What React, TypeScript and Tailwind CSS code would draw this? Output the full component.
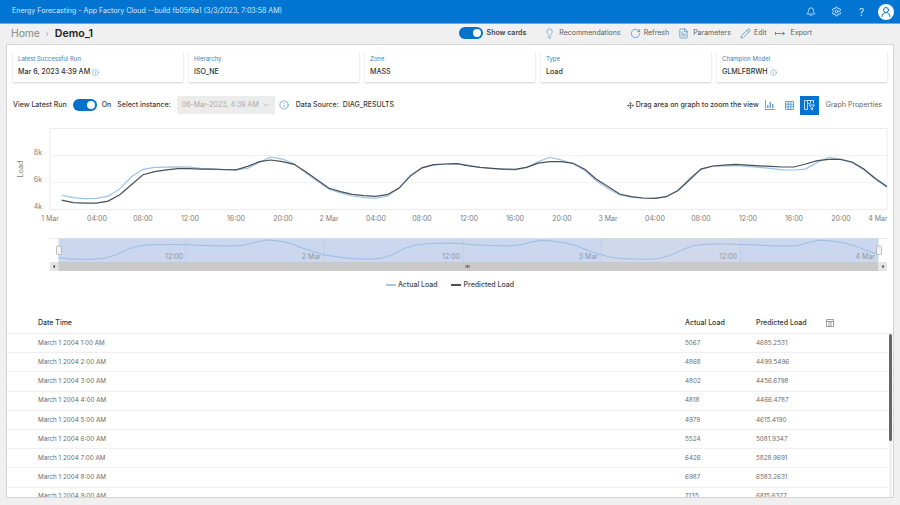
import React from "react";
import { Bell, Settings, Lightbulb, RotateCw, FileText, Pencil, Info, ChevronDown, ChevronRight, Move, UserRound } from "lucide-react";

const actual = [
  5067, 4868, 4802, 4818, 4979, 5524, 6426, 6987, 7135, 7150, 7170, 7140, 7050, 7000, 6950, 6930, 7050, 7500, 7900, 7750, 7400, 6700, 6100, 5500,
  5230, 4990, 4870, 4820, 4970, 5570, 6560, 7100, 7300, 7380, 7400, 7300, 7120, 7050, 6980, 6950, 7130, 7560, 7880, 7680, 7400, 6900, 6120, 5560,
  5070, 4900, 4830, 4810, 4920, 5420, 6300, 7000, 7200, 7250, 7260, 7200, 7130, 7050, 6950, 6930, 7000, 7500, 7880, 7730, 7480, 6950, 6240, 5620,
];
const predicted = [
  4685, 4499, 4456, 4466, 4615, 5081, 5828, 6583, 6815, 6950, 7030, 7040, 7000, 6990, 6970, 6950, 7200, 7550, 7680, 7550, 7360, 6800, 6190, 5570,
  5310, 5120, 5020, 4970, 5090, 5570, 6480, 7100, 7330, 7380, 7400, 7250, 7130, 7060, 7000, 6985, 7130, 7450, 7550, 7550, 7430, 6985, 6240, 5700,
  5140, 4940, 4840, 4820, 4940, 5390, 6190, 7000, 7230, 7300, 7360, 7300, 7250, 7200, 7160, 7160, 7380, 7630, 7730, 7730, 7530, 7000, 6300, 5700,
];

const mainPts = (d: number[]) =>
  d.map((v, i) => `${(50 + (i + 1) * 11.625).toFixed(1)},${(209.3 - ((v - 4000) / 1000) * 13.4).toFixed(1)}`).join(" ");
const navPts = (d: number[]) =>
  d.map((v, i) => `${(58.5 + i * 11.54).toFixed(1)},${(259.3 - ((v - 4800) / 3100) * 19.3).toFixed(1)}`).join(" ");

const xTicks = [
  [50, "1 Mar"], [97, "04:00"], [143, "08:00"], [190, "12:00"], [236, "16:00"], [283, "20:00"], [329, "2 Mar"],
  [376, "04:00"], [422, "08:00"], [469, "12:00"], [515, "16:00"], [562, "20:00"], [608, "3 Mar"],
  [655, "04:00"], [701, "08:00"], [748, "12:00"], [794, "16:00"], [841, "20:00"], [878, "4 Mar"],
] as const;

const rows = [
  ["March 1 2004 1:00 AM", "5067", "4685.2531"],
  ["March 1 2004 2:00 AM", "4868", "4499.5496"],
  ["March 1 2004 3:00 AM", "4802", "4456.6798"],
  ["March 1 2004 4:00 AM", "4818", "4466.4787"],
  ["March 1 2004 5:00 AM", "4979", "4615.4190"],
  ["March 1 2004 6:00 AM", "5524", "5081.9347"],
  ["March 1 2004 7:00 AM", "6426", "5828.9691"],
  ["March 1 2004 8:00 AM", "6987", "6583.2631"],
  ["March 1 2004 9:00 AM", "7135", "6815.6377"],
];

const cards = [
  { label: "Latest Successful Run", value: "Mar 6, 2023 4:39 AM", info: true },
  { label: "Hierarchy", value: "ISO_NE" },
  { label: "Zone", value: "MASS" },
  { label: "Type", value: "Load" },
  { label: "Champion Model", value: "GLMLFBRWH", info: true },
];

const Toggle = () => (
  <span className="flex h-[12px] w-[24px] items-center justify-end rounded-full bg-[#0272cc] pr-[2px]">
    <span className="h-[8px] w-[8px] rounded-full bg-white" />
  </span>
);

const Chart = () => (
  <svg className="block h-[155px] w-[886px]" viewBox="7 120 886 155" fontFamily="Inter, sans-serif">
    <rect x="50" y="128.5" width="837" height="81" fill="none" stroke="#ececec" />
    <line x1="50" x2="887" y1="155.5" y2="155.5" stroke="#f2f2f2" />
    <line x1="50" x2="887" y1="182.5" y2="182.5" stroke="#f2f2f2" />
    <g fontSize="7" fill="#7d7d7d" textAnchor="end">
      <text x="42" y="155">8k</text>
      <text x="42" y="182">6k</text>
      <text x="42" y="209">4k</text>
    </g>
    <text x="0" y="0" fontSize="7" fill="#7d7d7d" textAnchor="middle" transform="translate(23 169) rotate(-90)">Load</text>
    <g fontSize="7" fill="#7d7d7d" textAnchor="middle">
      {xTicks.map(([x, t], i) => (
        <text key={i} x={x} y="221">{t}</text>
      ))}
    </g>
    <polyline points={mainPts(actual)} fill="none" stroke="#9cc3e6" strokeWidth="1.2" />
    <polyline points={mainPts(predicted)} fill="none" stroke="#4a5058" strokeWidth="1.2" />

    {/* navigator */}
    <line x1="50" x2="887" y1="238.5" y2="238.5" stroke="#e6e6e6" />
    <rect x="58.5" y="238.5" width="819.5" height="23.5" fill="#cad7ee" />
    <rect x="601.5" y="238.5" width="138.5" height="23.5" fill="#d0d9ec" />
    {[185.7, 324, 463, 601.5, 740, 878].map((x) => (
      <line key={x} x1={x} x2={x} y1="238.5" y2="262" stroke="#bcc8e0" strokeWidth="0.7" />
    ))}
    <g fontSize="7" fill="#8f97a8" textAnchor="end">
      <text x="183" y="259">12:00</text>
      <text x="321" y="259">2 Mar</text>
      <text x="460" y="259">12:00</text>
      <text x="598" y="259">3 Mar</text>
      <text x="737" y="259">12:00</text>
      <text x="875" y="259">4 Mar</text>
    </g>
    <polyline points={navPts(actual)} fill="none" stroke="#9bbde2" strokeWidth="1" />
    <rect x="50" y="262" width="837" height="9" fill="#c9c9c9" />
    <rect x="50" y="262" width="8.5" height="9" fill="#e4e4e4" />
    <rect x="878" y="262" width="9" height="9" fill="#e4e4e4" />
    <path d="M52.8 266.5l2.2-1.8v3.6z" fill="#444" />
    <path d="M884.5 266.5l-2.2-1.8v3.6z" fill="#444" />
    <path d="M466 265v3M467.5 265v3M469 265v3" stroke="#444" strokeWidth="0.7" />
    <rect x="56.5" y="246" width="5" height="8.5" rx="1" fill="#f2f2f2" stroke="#999" strokeWidth="0.6" />
    <rect x="876.5" y="246" width="5" height="8.5" rx="1" fill="#f2f2f2" stroke="#999" strokeWidth="0.6" />
  </svg>
);

const ActionItem = ({ icon, label, gap }: { icon: React.ReactNode; label: string; gap: string }) => (
  <span className={`flex items-center ${gap} text-[#5c5c5c]`}>
    {icon}
    {label}
  </span>
);

export default function App() {
  return (
    <div className="h-[505px] w-[900px] overflow-hidden bg-[#f0f0f0] font-['Inter',sans-serif]">
      {/* top bar */}
      <header className="flex h-[24px] items-center justify-between border-b border-[#5cb0ec] bg-[#0275d3] pl-[12px] pr-[6px] text-white">
        <span className="text-[7.05px] text-[#d6e9f8]">Energy Forecasting - App Factory Cloud --build fb05f9a1 (3/3/2023, 7:03:58 AM)</span>
        <div className="flex items-center">
          <Bell className="h-[10px] w-[10px] text-[#d6e9f8]" />
          <Settings className="ml-[15px] h-[11px] w-[11px] text-[#d6e9f8]" />
          <span className="ml-[17px] text-[10px] leading-none text-[#d6e9f8]">?</span>
          <span className="ml-[14px] flex h-[16px] w-[16px] items-center justify-center rounded-full bg-white">
            <UserRound className="h-[12px] w-[12px] text-[#0275d3]" />
          </span>
        </div>
      </header>

      {/* breadcrumb and actions */}
      <div className="flex h-[20px] items-center justify-between pl-[11px] pr-[88px]">
        <div className="flex items-center">
          <span className="text-[10.3px] text-[#8a8a8a]">Home</span>
          <ChevronRight className="ml-[3px] h-[8px] w-[8px] text-[#999]" />
          <span className="ml-[4px] text-[10.6px] font-semibold text-[#222]">Demo_1</span>
        </div>
        <div className="-mt-[2px] flex items-center text-[7px]">
          <Toggle />
          <span className="ml-[4px] font-semibold text-[#444]">Show cards</span>
          <div className="ml-[18px] flex items-center gap-[9px]">
            <ActionItem gap="gap-[4px]" label="Recommendations" icon={<Lightbulb className="h-[11px] w-[11px] text-[#4d94d4]" strokeWidth={1.5} />} />
            <ActionItem gap="gap-[3px]" label="Refresh" icon={<RotateCw className="h-[11px] w-[11px] text-[#3d87c9]" strokeWidth={1.5} />} />
            <ActionItem gap="gap-[4px]" label="Parameters" icon={<FileText className="h-[11px] w-[11px] text-[#3d87c9]" strokeWidth={1.5} />} />
            <ActionItem gap="gap-[3px]" label="Edit" icon={<Pencil className="h-[11px] w-[11px] text-[#3d87c9]" strokeWidth={1.5} />} />
            <ActionItem
              gap="gap-[4px]"
              label="Export"
              icon={
                <svg className="h-[11px] w-[11px]" viewBox="0 0 11 11" fill="none" stroke="#3d87c9" strokeWidth="0.9">
                  <path d="M0.5 4v3M0.5 5.5h9M7.7 3.8l2 1.7-2 1.7" />
                </svg>
              }
            />
          </div>
        </div>
      </div>

      {/* main panel */}
      <main className="relative ml-[6px] h-[454px] w-[888px] overflow-hidden border border-[#d4d4d4] bg-white">
        <div className="grid grid-cols-5 gap-[6px] pl-[6px] pr-[6px] pt-[6px]">
          {cards.map((c) => (
            <div key={c.label} className="h-[31px] bg-white pl-[5px] pt-[3px] shadow-[0_1px_2px_rgba(0,0,0,0.18)]">
              <div className="text-[6px] leading-[9px] text-[#3d7fbd]">{c.label}</div>
              <div className="mt-[4px] flex items-center gap-[2px] text-[7.1px] font-medium leading-[10px] text-[#333]">
                {c.value}
                {c.info && <Info className="h-[7px] w-[7px] text-[#6aa5da]" />}
              </div>
            </div>
          ))}
        </div>

        {/* controls */}
        <div className="mt-[13px] flex h-[20px] items-center justify-between pl-[6px] pr-[11px] text-[7px] font-medium text-[#3a3a3a]">
          <div className="flex items-center">
            <span>View Latest Run</span>
            <span className="ml-[6px]"><Toggle /></span>
            <span className="ml-[5px]">On</span>
            <span className="ml-[6px]">Select instance:</span>
            <span className="ml-[6px] flex h-[18px] w-[98px] items-center justify-between whitespace-nowrap bg-[#ececec] pl-[5px] pr-[5px] font-normal text-[#aaaaaa]">
              06-Mar-2023, 4:39 AM
              <ChevronDown className="h-[8px] w-[8px]" />
            </span>
            <Info className="ml-[4px] h-[10px] w-[10px] text-[#2f80c8]" strokeWidth={1.5} />
            <span className="ml-[7px]">Data Source:</span>
            <span className="ml-[4px]">DIAG_RESULTS</span>
          </div>
          <div className="flex items-center">
            <Move className="h-[7px] w-[7px] text-[#333]" />
            <span className="ml-[2px]">Drag area on graph to zoom the view</span>
            <svg className="ml-[6px] h-[10px] w-[10px]" viewBox="0 0 10 10" fill="#6ea6d6">
              <path d="M0 0h1v9h9v1H0zM2 5h1.5v3H2zM4.5 2h1.5v6H4.5zM7 4h1.5v4H7z" />
            </svg>
            <svg className="ml-[10px] h-[9px] w-[9px]" viewBox="0 0 9 9" fill="none" stroke="#4c8fcb" strokeWidth="0.8">
              <path d="M0.5 0.5h8v8h-8zM3.2 0.5v8M5.8 0.5v8M0.5 3.2h8M0.5 5.8h8" />
            </svg>
            <span className="ml-[6px] flex h-[19px] w-[19px] items-center justify-center bg-[#0275d3]">
              <svg className="h-[11px] w-[11px]" viewBox="0 0 11 11" fill="none" stroke="#d7e9f8" strokeWidth="0.9">
                <path d="M0.5 0.5h9M0.5 0.5v9h3v-9M3.5 3.5h2M6.5 0.5v3M9.5 0.5v3M5 5h5.5L8.5 7.5v2.5l-1.5-1V7.5z" />
              </svg>
            </span>
            <span className="ml-[7px] font-normal text-[#666]">Graph Properties</span>
          </div>
        </div>

        <div className="mt-[5px]"><Chart /></div>

        {/* legend */}
        <div className="mt-[1px] flex h-[18px] items-center justify-center text-[7px] font-medium text-[#444]">
          <span className="mr-[2px] h-[1.5px] w-[10px] bg-[#a9c7e6]" />
          <span>Actual Load</span>
          <span className="ml-[13px] mr-[3px] h-[1.5px] w-[10px] bg-[#4a5058]" />
          <span>Predicted Load</span>
        </div>

        {/* table */}
        <div className="relative mt-[19px]">
          <div className="flex h-[21px] items-center border-b border-[#f0f0f0] pl-[31px] text-[7px] font-medium text-[#333]">
            <span className="w-[647px]">Date Time</span>
            <span className="w-[71px]">Actual Load</span>
            <span className="w-[70px]">Predicted Load</span>
            <svg className="h-[8px] w-[8px]" viewBox="0 0 8 8" fill="none" stroke="#777" strokeWidth="0.7">
              <path d="M0.5 0.5h7v7h-7zM0.5 2.5h7M3 2.5v5M5 2.5v5" />
            </svg>
          </div>
          {rows.map((r) => (
            <div key={r[0]} className="flex h-[19.2px] items-center border-b border-[#f0f0f0] pl-[31px] pt-[1px] text-[6.3px] text-[#6b6b6b]">
              <span className="w-[647px]">{r[0]}</span>
              <span className="w-[71px]">{r[1]}</span>
              <span>{r[2]}</span>
            </div>
          ))}
          <div className="absolute right-[1px] top-[21px] h-[170px] w-[3px] bg-[#f0f0f0]">
            <div className="h-[107px] w-[3px] rounded-full bg-[#666]" />
          </div>
        </div>
      </main>
    </div>
  );
}
